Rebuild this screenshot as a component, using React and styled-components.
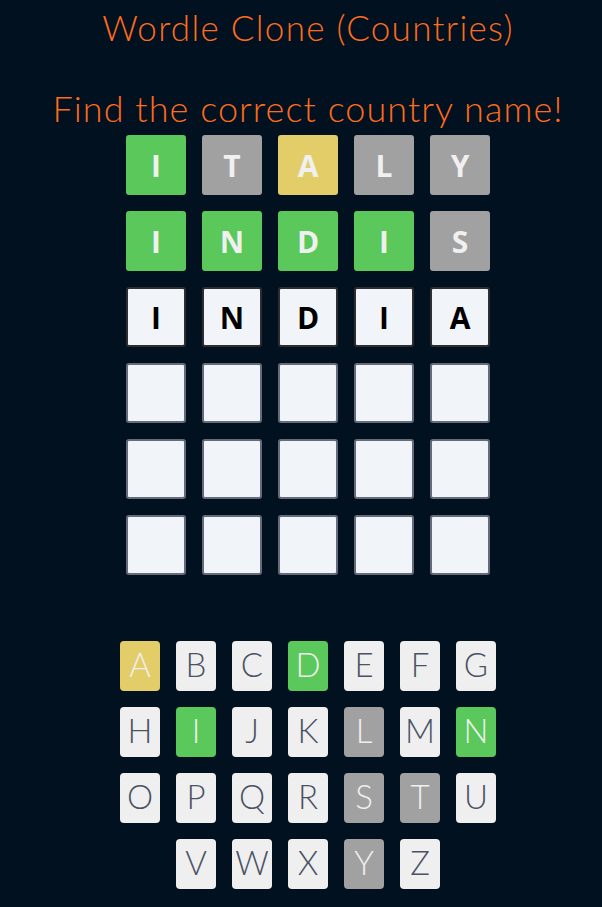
import React from "react";
import styled, { createGlobalStyle } from "styled-components";

const GlobalStyle = createGlobalStyle`
  body {
    margin: 0;
    background: #01111f;
  }
`;

const guesses = [
  [["I", "green"], ["T", "gray"], ["A", "yellow"], ["L", "gray"], ["Y", "gray"]],
  [["I", "green"], ["N", "green"], ["D", "green"], ["I", "green"], ["S", "gray"]],
  [["I", "typed"], ["N", "typed"], ["D", "typed"], ["I", "typed"], ["A", "typed"]],
];

const keyRows = ["ABCDEFG", "HIJKLMN", "OPQRSTU", "VWXYZ"];
const keyState = {
  A: "yellow",
  D: "green",
  I: "green",
  N: "green",
  L: "gray",
  S: "gray",
  T: "gray",
  Y: "gray",
};

const colors = {
  green: "#5ac85a",
  gray: "#a1a1a1",
  yellow: "#e2cd68",
};

const App = () => {
  const rows = [];
  for (let r = 0; r < 6; r++) {
    rows.push(guesses[r] || Array(5).fill(["", "empty"]));
  }

  return (
    <Page>
      <GlobalStyle />
      <Title>Wordle Clone (Countries)</Title>
      <Subtitle>Find the correct country name!</Subtitle>
      <Board>
        {rows.map((row, i) =>
          row.map(([letter, state], j) => (
            <Tile key={`${i}-${j}`} $state={state}>
              {letter}
            </Tile>
          ))
        )}
      </Board>
      <Keyboard>
        {keyRows.map((row) => (
          <KeyRow key={row}>
            {row.split("").map((k) => (
              <Key key={k} $state={keyState[k]}>
                {k}
              </Key>
            ))}
          </KeyRow>
        ))}
      </Keyboard>
    </Page>
  );
};

export default App;

const Page = styled.div`
  min-height: 100vh;
  box-sizing: border-box;
  padding: 6px 0 20px 14px;
  display: flex;
  flex-direction: column;
  align-items: center;
  font-family: "Lato", "Liberation Sans", sans-serif;
`;

const Title = styled.h1`
  margin: 0;
  color: #fe6b1c;
  font-size: 35px;
  font-weight: 300;
  letter-spacing: 1.3px;
  line-height: 42px;
`;

const Subtitle = styled.h2`
  margin: 38px 0 0;
  color: #fe6b1c;
  font-size: 36px;
  font-weight: 300;
  letter-spacing: 1.05px;
  line-height: 44px;
`;

const Board = styled.div`
  margin-top: 5px;
  display: grid;
  grid-template-columns: repeat(5, 60px);
  grid-auto-rows: 60px;
  gap: 16px;
`;

const Tile = styled.div`
  box-sizing: border-box;
  display: flex;
  align-items: center;
  justify-content: center;
  border-radius: 3px;
  font-family: "Open Sans", "Liberation Sans", sans-serif;
  font-weight: 700;
  font-size: 30px;
  background: ${(p) => colors[p.$state] || "#f1f4f9"};
  color: ${(p) => (colors[p.$state] ? "#f0f0f0" : "#000")};
  border: ${(p) =>
    p.$state === "typed"
      ? "2px solid #2e2e2e"
      : p.$state === "empty"
      ? "2px solid #656b78"
      : "none"};
`;

const Keyboard = styled.div`
  margin-top: 66px;
  display: flex;
  flex-direction: column;
  gap: 16px;
`;

const KeyRow = styled.div`
  display: flex;
  justify-content: center;
  gap: 16px;
`;

const Key = styled.div`
  width: 40px;
  height: 50px;
  padding-bottom: 4px;
  box-sizing: border-box;
  border-radius: 4px;
  display: flex;
  align-items: center;
  justify-content: center;
  font-size: 33px;
  font-weight: 300;
  background: ${(p) => colors[p.$state] || "#efefef"};
  color: ${(p) => (p.$state ? "#f0f0f0" : "#4a5264")};
`;
